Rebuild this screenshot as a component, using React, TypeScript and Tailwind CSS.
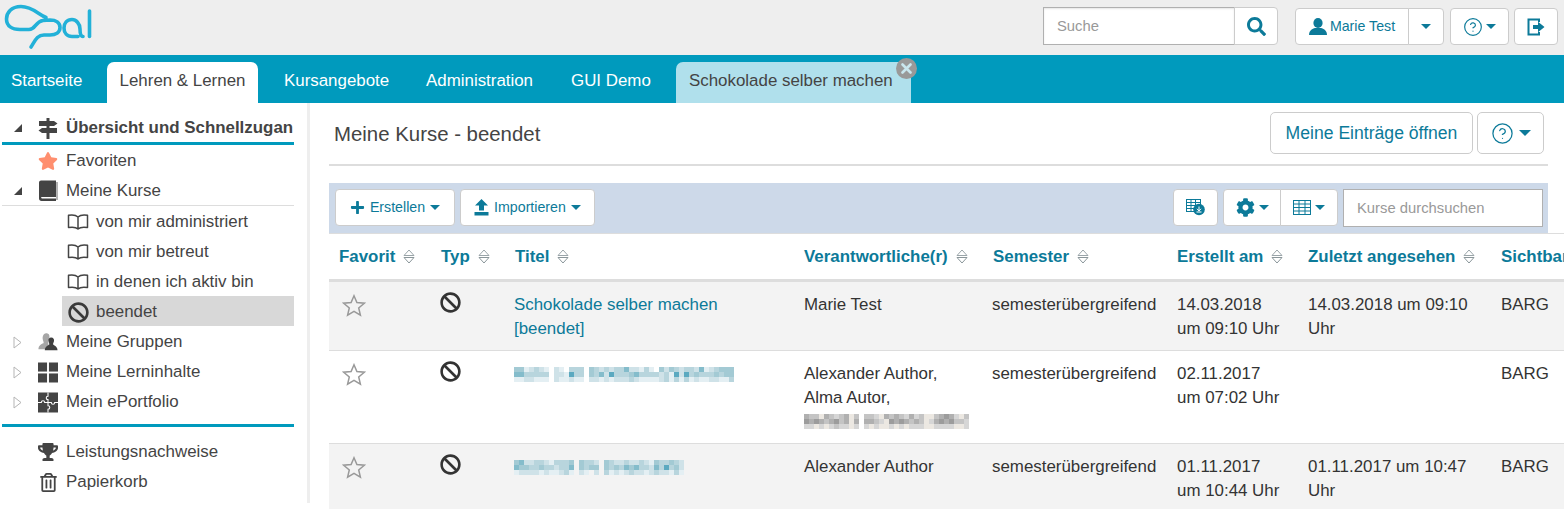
import React from "react";
import { FaSearch, FaStar, FaBan, FaTrophy, FaRegTrashAlt, FaPlus, FaCog } from "react-icons/fa";
import { CircleHelp } from "lucide-react";

const teal = ["#ffffff", "#e4eff3", "#cfe2e8", "#b8d5dd", "#a3cad4", "#84bccb", "#5ba9c0"];
const gray = ["#ffffff", "#ece8e2", "#d6d6d6", "#c4c4c4", "#b0b0b0", "#9c9c9c"];

function Pixels({ rows, palette, bg }: { rows: string[]; palette: string[]; bg?: string }) {
  const w = rows[0].length * 5;
  return (
    <svg width={w} height={15} viewBox={`0 0 ${w} 15`} shapeRendering="crispEdges" className="block">
      {rows.map((r, y) =>
        r.split("").map((c, x) => (
          <rect key={`${x}-${y}`} x={x * 5} y={y * 5} width={5} height={5} fill={c === "0" ? bg ?? palette[0] : palette[Number(c)]} />
        ))
      )}
    </svg>
  );
}

const Caret = ({ big }: { big?: boolean }) => (
  <span className={big ? "inline-block w-0 h-0 border-x-[6px] border-t-[6px] border-x-transparent border-t-[#0c7a99]" : "inline-block w-0 h-0 border-x-[5px] border-t-[5px] border-x-transparent border-t-[#0c7a99]"} />
);

const Logo = () => (
  <svg width="100" height="55" viewBox="0 0 100 55" fill="none" stroke="#22b1d8" strokeWidth="3.6" strokeLinecap="round" strokeLinejoin="round" className="shrink-0">
    <path d="M46 17.5 C38 14 32 6.5 21 6.5 C11 6.5 6.5 13 6.5 19 C6.5 26 12 29.5 20 29.5 L29 29.5 C36 29.5 35 21.5 43 20.5 L50 20 C56 20 60 23 60 27.5 C60 32 56 35 50 35 L44 35 C37 35 35 41 31 47" />
    <path d="M83 36.5 C80.5 36.5 80 33 80 29 C80 23.5 76 19.5 72 19.5 C67 19.5 64 23 64 28 C64 33 67 36.5 72 36.5 L78 36.5" />
    <path d="M89.5 11 L89.5 36.5" />
  </svg>
);

const Signs = () => (
  <svg width="20" height="21" viewBox="0 0 20 21" fill="#444">
    <rect x="8.5" y="0" width="3" height="21" />
    <path d="M1 3 H16 L19.5 5.5 L16 8 H1 Z" />
    <path d="M4 10 H19 V15 H4 L0.5 12.5 Z" />
  </svg>
);

const Sort = () => (
  <svg width="12" height="15" viewBox="0 0 12 15" className="shrink-0 ml-[8px]" fill="none">
    <path d="M6 1 L11 6.5 H1 Z" stroke="#9aa5a9" strokeWidth="1" />
    <path d="M6 14 L11 8.5 H1 Z" stroke="#8a969a" strokeWidth="1" />
  </svg>
);

const OpenBook = () => (
  <svg width="22" height="18" viewBox="0 0 22 18" fill="none" stroke="#444" strokeWidth="1.5" strokeLinejoin="round">
    <path d="M11 4 C9 2 5 1.6 1.5 2.2 V14.5 C5 14 9 14 11 16 C13 14 17 14 20.5 14.5 V2.2 C17 1.6 13 2 11 4 Z M11 4 V16" />
  </svg>
);

const Book = () => (
  <svg width="20" height="22" viewBox="0 0 20 22">
    <path d="M3 0.5 H18 V17 H4 C2.8 17 2.5 18 4 18.5 H18 V21 H3.5 C2 21 1 20 1 18.5 V2.5 C1 1.3 2 0.5 3 0.5 Z" fill="#444" />
    <path d="M19 2 V20" stroke="#444" strokeWidth="0.8" />
  </svg>
);

const Users = () => (
  <svg width="22" height="20" viewBox="0 0 22 20">
    <path d="M9 0.5 C12 0.5 13 3 12.5 5 C12.2 7 11.5 8 11 9 L12 18 H0.5 C0.5 14 3.5 12.5 6 11.5 C6.5 10.5 6 9.5 5.5 8 C4.5 5 5.5 0.5 9 0.5 Z" fill="#a6a6a6" />
    <path d="M14.5 5 C17 5 18 7 17.6 9 C17.3 10.5 16.6 11.5 16.5 12.5 C16.7 13.5 21.5 14.5 21.5 19 H7.5 C7.5 14.5 12.3 13.5 12.5 12.5 C12.4 11.5 11.7 10.5 11.4 9 C11 7 12 5 14.5 5 Z" fill="#3f3f3f" />
  </svg>
);

const Grid = () => (
  <svg width="21" height="21" viewBox="0 0 21 21" fill="#444">
    <rect x="0" y="0" width="9.5" height="9.5" />
    <rect x="11.5" y="0" width="9.5" height="9.5" />
    <rect x="0" y="11.5" width="9.5" height="9.5" />
    <rect x="11.5" y="11.5" width="9.5" height="9.5" />
  </svg>
);

const Puzzle = () => (
  <svg width="21" height="21" viewBox="0 0 21 21">
    <rect width="21" height="21" fill="#444" />
    <path d="M10.5 0 V4 C8 4 8 7.5 10.5 7.5 V10.5 M0 10.5 H3.5 C3.5 8 7 8 7 10.5 H10.5 M10.5 10.5 H14 C14 13 17.5 13 17.5 10.5 H21 M10.5 10.5 V14 C13 14 13 17.5 10.5 17.5 V21" fill="none" stroke="#fff" strokeWidth="1.1" />
  </svg>
);

const Upload = () => (
  <svg width="15" height="17" viewBox="0 0 15 17" fill="#0c7a99">
    <path d="M7.5 0 L14 6.5 H10 V11.5 H5 V6.5 H1 Z" />
    <rect x="0.5" y="13" width="14" height="3.5" />
  </svg>
);

const User = () => (
  <svg width="18" height="17" viewBox="0 0 18 17" fill="#0c7a99">
    <ellipse cx="9" cy="5" rx="4.6" ry="5" />
    <path d="M0 17 C0 12.5 3.5 10.5 6 10 L12 10 C14.5 10.5 18 12.5 18 17 Z" />
  </svg>
);

const TableDl = () => (
  <svg width="19" height="17" viewBox="0 0 19 17" fill="none">
    <rect x="0.5" y="0.5" width="14" height="12" stroke="#0c7a99" fill="#fff" />
    <path d="M0.5 3.5 H14.5 M0.5 6.5 H14.5 M0.5 9.5 H14.5 M5 0.5 V12.5 M9.5 0.5 V12.5" stroke="#0c7a99" />
    <circle cx="13" cy="10.5" r="5.8" fill="#0c7a99" />
    <path d="M13 7.5 V11 M11 9.8 L13 12 L15 9.8 M10.5 13 H15.5" stroke="#fff" strokeWidth="1" />
  </svg>
);

const TableIcon = () => (
  <svg width="18" height="15" viewBox="0 0 18 15" fill="none" stroke="#0c7a99" strokeWidth="1">
    <rect x="0.5" y="0.5" width="17" height="14" />
    <path d="M0.5 4 H17.5 M0.5 7.5 H17.5 M0.5 11 H17.5 M6 0.5 V14.5 M12 0.5 V14.5" />
  </svg>
);

const Logout = () => (
  <svg width="18" height="18" viewBox="0 0 18 18" fill="#0c7a99">
    <path d="M0.5 0.5 H13 V4 H11 V2.5 H2.5 V15.5 H11 V14 H13 V17.5 H0.5 Z" />
    <path d="M6 7 H11 V3.8 L17.5 9 L11 14.2 V11 H6 Z" />
  </svg>
);

const OutlineStar = () => (
  <svg width="24" height="23" viewBox="0 0 24 23" fill="none" stroke="#999" strokeWidth="1.5" strokeLinejoin="miter" className="mt-[1px]">
    <path d="M12 1.8 L14.9 8.6 L22.3 9.2 L16.7 14 L18.4 21.2 L12 17.4 L5.6 21.2 L7.3 14 L1.7 9.2 L9.1 8.6 Z" />
  </svg>
);

const Open = () => (
  <svg width="10" height="10" viewBox="0 0 10 10"><path d="M9 1 V9 H1 Z" fill="#444" /></svg>
);
const Closed = () => (
  <svg width="9" height="13" viewBox="0 0 9 13" fill="none"><path d="M1 1 L8 6.5 L1 12 Z" stroke="#b5b5b5" /></svg>
);

function Row({ arrow, icon, children, bold }: { arrow?: React.ReactNode; icon?: React.ReactNode; children: React.ReactNode; bold?: boolean }) {
  return (
    <div className={`h-[30px] pt-[2px] flex items-center whitespace-nowrap ${bold ? "font-bold" : ""}`}>
      <span className="w-[36px] shrink-0 flex justify-center pl-[3px] pr-[8px]">{arrow}</span>
      <span className="w-[28px] shrink-0 flex justify-center pr-[8px]">{icon}</span>
      <span>{children}</span>
    </div>
  );
}

function Sub({ icon, children, active }: { icon: React.ReactNode; children: React.ReactNode; active?: boolean }) {
  return (
    <div className={`h-[30px] pt-[2px] ml-[60px] flex items-center ${active ? "bg-[#d8d8d8]" : ""}`}>
      <span className="w-[34px] shrink-0 flex justify-center pr-[2px]">{icon}</span>
      <span>{children}</span>
    </div>
  );
}

const Btn = ({ className = "", children }: { className?: string; children: React.ReactNode }) => (
  <div className={`bg-white border border-[#ccc] rounded-[4px] flex items-center justify-center text-[#0c7a99] ${className}`}>{children}</div>
);

const Th = ({ children, className = "pl-[10px]" }: { children: React.ReactNode; className?: string }) => (
  <th className={`text-left font-bold text-[#0c7a99] h-[46px] pt-[1px] border-b-[3px] border-[#ddd] whitespace-nowrap ${className}`}>
    <span className="inline-flex items-center">{children}<Sort /></span>
  </th>
);

const Td = ({ children, className = "pl-[10px]" }: { children?: React.ReactNode; className?: string }) => (
  <td className={`align-top pt-[11px] pb-[9px] pr-[8px] leading-[24px] border-b border-[#ddd] text-[#333] ${className}`}>{children}</td>
);

const Ban = () => <FaBan size={21} color="#333" className="-mt-[1px] -ml-[1px]" />;

export default function App() {
  return (
    <div className="w-[1564px] h-[509px] overflow-hidden bg-white text-[16.9px] text-[#444] font-['Liberation_Sans',Arial,sans-serif]">
      <header className="h-[55px] bg-[#eeeeee] flex items-start">
        <Logo />
        <div className="ml-auto flex items-start pr-[6px] pt-[7px] text-[14.2px]">
          <div className="flex h-[38px]">
            <input readOnly placeholder="Suche" className="w-[192px] h-[38px] px-[13px] text-[14.8px] bg-white border border-[#b0b0b0] shadow-[inset_0_1px_2px_rgba(0,0,0,0.1)] outline-none placeholder:text-[#999]" />
            <Btn className="w-[44px] -ml-[1px] rounded-l-none"><FaSearch size={19} /></Btn>
          </div>
          <div className="flex h-[37px] ml-[17px] mt-[1px]">
            <Btn className="w-[114px] rounded-r-none gap-[3px]"><User /><span>Marie Test</span></Btn>
            <Btn className="w-[36px] -ml-[1px] rounded-l-none"><Caret /></Btn>
          </div>
          <Btn className="w-[59px] h-[37px] ml-[6px] mt-[1px] gap-[3px]"><CircleHelp size={20} strokeWidth={1.4} /><Caret /></Btn>
          <Btn className="w-[44px] h-[37px] ml-[5px] mt-[1px]"><Logout /></Btn>
        </div>
      </header>

      <nav className="h-[48px] bg-[#009abd] flex items-end text-white">
        <div className="h-[41px] pb-[4px] pl-[11px] w-[95px] flex items-center">Startseite</div>
        <div className="w-[151px] justify-center h-[41px] pb-[4px] ml-[12px] flex items-center bg-white text-[#444] rounded-t-[7px]">Lehren &amp; Lernen</div>
        <div className="h-[41px] pb-[4px] ml-[26px] w-[105px] flex items-center whitespace-nowrap">Kursangebote</div>
        <div className="h-[41px] pb-[4px] ml-[37px] w-[108px] flex items-center whitespace-nowrap">Administration</div>
        <div className="h-[41px] pb-[4px] ml-[37px] w-[80px] flex items-center whitespace-nowrap">GUI Demo</div>
        <div className="relative h-[41px] pb-[4px] ml-[25px] w-[235px] pl-[13px] flex items-center whitespace-nowrap bg-[#b0e0ec] text-[#444] rounded-t-[7px]">
          Schokolade selber machen
          <span className="absolute -right-[6px] -top-[4px] w-[21px] h-[21px] rounded-full bg-[#999] flex items-center justify-center">
            <svg width="11" height="11" viewBox="0 0 11 11" stroke="#c9e6ee" strokeWidth="2.6" strokeLinecap="round"><path d="M1.5 1.5 L9.5 9.5 M9.5 1.5 L1.5 9.5" /></svg>
          </span>
        </div>
      </nav>

      <main className="flex items-start">
        <aside className="w-[310px] h-[400px] shrink-0 border-r-[3px] border-[#eee] pl-[2px] pt-[9px]">
          <div className="w-[292px]">
            <div className="border-b-[3px] border-[#009abd]">
              <Row bold arrow={<Open />} icon={<Signs />}>Übersicht und Schnellzugan</Row>
            </div>
            <Row icon={<FaStar size={20} color="#ff8f6f" />}>Favoriten</Row>
            <div className="border-b border-[#ddd]">
              <Row arrow={<Open />} icon={<Book />}>Meine Kurse</Row>
            </div>
            <Sub icon={<OpenBook />}>von mir administriert</Sub>
            <Sub icon={<OpenBook />}>von mir betreut</Sub>
            <Sub icon={<OpenBook />}>in denen ich aktiv bin</Sub>
            <Sub active icon={<FaBan size={21} color="#3a3a3a" />}>beendet</Sub>
            <Row arrow={<Closed />} icon={<Users />}>Meine Gruppen</Row>
            <Row arrow={<Closed />} icon={<Grid />}>Meine Lerninhalte</Row>
            <Row arrow={<Closed />} icon={<Puzzle />}>Mein ePortfolio</Row>
            <div className="mt-[8px] mb-[9px] border-b-[3px] border-[#009abd]" />
            <Row icon={<FaTrophy size={20} color="#444" />}>Leistungsnachweise</Row>
            <Row icon={<FaRegTrashAlt size={19} color="#444" />}>Papierkorb</Row>
          </div>
        </aside>

        <section className="flex-1 min-w-0 pl-[19px]">
          <div className="mr-[16px] h-[63px] pt-[9px] pb-[10px] flex items-start justify-between border-b-2 border-[#ddd]">
            <h1 className="ml-[5px] mt-[9px] text-[20.4px] leading-[26px] font-normal text-[#444]">Meine Kurse - beendet</h1>
            <div className="flex gap-[4px] pr-[4px]">
              <Btn className="w-[203px] h-[42px] rounded-[5px] text-[17.6px]">Meine Einträge öffnen</Btn>
              <Btn className="w-[67px] h-[42px] rounded-[5px] gap-[5px]"><CircleHelp size={23} strokeWidth={1.3} /><Caret big /></Btn>
            </div>
          </div>

          <div className="mr-[16px] mt-[17px] h-[50px] bg-[#cdd9e9] pt-[6px] pl-[6px] pr-[5px] flex items-start text-[14.2px]">
            <Btn className="w-[120px] h-[37px] gap-[5px]"><FaPlus size={15} /><span>Erstellen</span><Caret /></Btn>
            <Btn className="w-[135px] h-[37px] ml-[5px] gap-[5px]"><Upload /><span>Importieren</span><Caret /></Btn>
            <Btn className="w-[45px] h-[37px] ml-auto"><TableDl /></Btn>
            <div className="flex ml-[5px]">
              <Btn className="w-[58px] h-[37px] rounded-r-none gap-[4px]"><FaCog size={19} /><Caret /></Btn>
              <Btn className="w-[58px] h-[37px] -ml-[1px] rounded-l-none gap-[4px]"><TableIcon /><Caret /></Btn>
            </div>
            <input readOnly placeholder="Kurse durchsuchen" className="w-[200px] h-[38px] ml-[5px] px-[13px] text-[14.8px] bg-white border border-[#b0b0b0] outline-none placeholder:text-[#999]" />
          </div>

          <div className="overflow-hidden border-t border-[#ddd]">
            <table className="table-fixed w-[1363px]">
              <colgroup>
                <col className="w-[102px]" />
                <col className="w-[73px]" />
                <col className="w-[290px]" />
                <col className="w-[189px]" />
                <col className="w-[184px]" />
                <col className="w-[131px]" />
                <col className="w-[193px]" />
                <col className="w-[201px]" />
              </colgroup>
              <thead>
                <tr>
                  <Th>Favorit</Th>
                  <Th>Typ</Th>
                  <Th className="pl-[11px]">Titel</Th>
                  <Th>Verantwortliche(r)</Th>
                  <Th>Semester</Th>
                  <Th>Erstellt am</Th>
                  <Th>Zuletzt angesehen</Th>
                  <th className="text-left font-bold text-[#0c7a99] pl-[10px] pt-[1px] border-b-[3px] border-[#ddd]">Sichtbar</th>
                </tr>
              </thead>
              <tbody>
                <tr className="bg-[#f3f3f3]">
                  <Td className="pl-[13px]"><OutlineStar /></Td>
                  <Td><Ban /></Td>
                  <Td className="pl-[10px] !text-[#0c7a99]">Schokolade selber machen<br />[beendet]</Td>
                  <Td>Marie Test</Td>
                  <Td className="pl-[9px]">semesterübergreifend</Td>
                  <Td>14.03.2018<br />um 09:10 Uhr</Td>
                  <Td>14.03.2018 um 09:10<br />Uhr</Td>
                  <Td>BARG</Td>
                </tr>
                <tr>
                  <Td className="pl-[13px]"><OutlineStar /></Td>
                  <Td><Ban /></Td>
                  <Td>
                    <div className="pt-[5px]">
                      <Pixels palette={teal} rows={[
                        "44123210210333043232335221310424323325123444",
                        "55333330221633043526333453333231626343334344",
                        "11221110211211022121222321111231313121122113",
                      ]} />
                    </div>
                  </Td>
                  <Td>Alexander Author,<br />Alma Autor,<br />
                    <div className="h-[24px] pt-[4px]">
                      <Pixels palette={gray} rows={[
                        "433143234130332143432423113454213",
                        "545434534140443215454343124545332",
                        "221212322120212112121222112222112",
                      ]} />
                    </div>
                  </Td>
                  <Td className="pl-[9px]">semesterübergreifend</Td>
                  <Td>02.11.2017<br />um 07:02 Uhr</Td>
                  <Td />
                  <Td>BARG</Td>
                </tr>
                <tr className="bg-[#f3f3f3]">
                  <Td className="pl-[13px]"><OutlineStar /></Td>
                  <Td><Ban /></Td>
                  <Td>
                    <div className="pt-[5px]">
                      <Pixels palette={teal} bg="#f3f3f3" rows={[
                        "4522332133340433204322322321433432",
                        "5443343323350434404343545332536342",
                        "1222212112310210203121232212322131",
                      ]} />
                    </div>
                  </Td>
                  <Td>Alexander Author</Td>
                  <Td className="pl-[9px]">semesterübergreifend</Td>
                  <Td>01.11.2017<br />um 10:44 Uhr</Td>
                  <Td>01.11.2017 um 10:47<br />Uhr</Td>
                  <Td>BARG</Td>
                </tr>
              </tbody>
            </table>
          </div>
        </section>
      </main>
    </div>
  );
}
